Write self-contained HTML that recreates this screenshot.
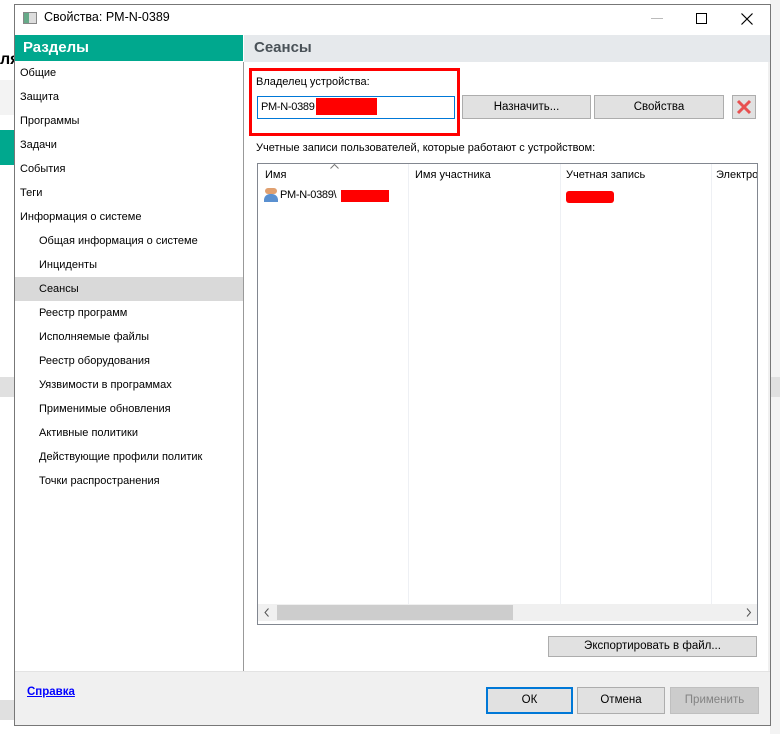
<!DOCTYPE html>
<html><head><meta charset="utf-8"><style>
*{box-sizing:border-box;margin:0;padding:0}
body{width:780px;height:734px;position:relative;overflow:hidden;background:#fff;font-family:"Liberation Sans",sans-serif;font-size:11px;color:#000}
.a{position:absolute}
.btn{position:absolute;background:#e1e1e1;border:1px solid #adadad;text-align:center;font-size:11.5px;line-height:20px}
.nav{position:absolute;left:15px;width:228px;height:24px;line-height:24px;font-size:11px}
</style></head><body>
<div class="a" style="left:0;top:40px;width:14px;height:40px;background:#fff;font-weight:bold;font-size:16px;line-height:40px">ля</div>
<div class="a" style="left:0;top:80px;width:14px;height:35px;background:#f3f3f3"></div>
<div class="a" style="left:0;top:130px;width:14px;height:35px;background:#00a88e"></div>
<div class="a" style="left:0;top:377px;width:14px;height:20px;background:#e0e0e0"></div>
<div class="a" style="left:0;top:700px;width:14px;height:20px;background:#e0e0e0"></div>
<div class="a" style="left:770px;top:0;width:10px;height:734px;background:#f3f3f3"></div>
<div class="a" style="left:770px;top:377px;width:10px;height:20px;background:#e0e0e0"></div>
<div class="a" style="left:14px;top:4px;width:757px;height:722px;border:1px solid #777;background:#fff"></div>
<div class="a" style="left:23px;top:12px;width:14px;height:12px;border:1px solid #888;background:linear-gradient(90deg,#6a8 0 40%,#ddd 40%)"></div>
<div class="a" style="left:44px;top:10px;font-size:12.5px">Свойства: PM-N-0389</div>
<div class="a" style="left:651px;top:18px;width:12px;height:1px;background:#bbb"></div>
<div class="a" style="left:696px;top:13px;width:11px;height:11px;border:1px solid #000"></div>
<svg class="a" style="left:741px;top:13px" width="12" height="12"><path d="M0.5 0.5L11.5 11.5M11.5 0.5L0.5 11.5" stroke="#000" stroke-width="1.2"/></svg>
<div class="a" style="left:15px;top:35px;width:228px;height:26px;background:#00a88e;color:#fff;font-weight:bold;font-size:15px;line-height:26px;padding-left:8px">Разделы</div>
<div class="a" style="left:244px;top:35px;width:526px;height:27px;background:#e6e9ec;color:#4a5258;font-weight:bold;font-size:15px;line-height:26px;padding-left:10px">Сеансы</div>
<div class="a" style="left:243px;top:62px;width:1px;height:609px;background:#999"></div>
<div class="a" style="left:768px;top:62px;width:2px;height:609px;background:#f0f0f0"></div>
<div class="nav" style="top:61px;padding-left:5px">Общие</div>
<div class="nav" style="top:85px;padding-left:5px">Защита</div>
<div class="nav" style="top:109px;padding-left:5px">Программы</div>
<div class="nav" style="top:133px;padding-left:5px">Задачи</div>
<div class="nav" style="top:157px;padding-left:5px">События</div>
<div class="nav" style="top:181px;padding-left:5px">Теги</div>
<div class="nav" style="top:205px;padding-left:5px">Информация о системе</div>
<div class="nav" style="top:229px;padding-left:24px">Общая информация о системе</div>
<div class="nav" style="top:253px;padding-left:24px">Инциденты</div>
<div class="nav" style="top:277px;padding-left:24px;background:#d9d9d9">Сеансы</div>
<div class="nav" style="top:301px;padding-left:24px">Реестр программ</div>
<div class="nav" style="top:325px;padding-left:24px">Исполняемые файлы</div>
<div class="nav" style="top:349px;padding-left:24px">Реестр оборудования</div>
<div class="nav" style="top:373px;padding-left:24px">Уязвимости в программах</div>
<div class="nav" style="top:397px;padding-left:24px">Применимые обновления</div>
<div class="nav" style="top:421px;padding-left:24px">Активные политики</div>
<div class="nav" style="top:445px;padding-left:24px">Действующие профили политик</div>
<div class="nav" style="top:469px;padding-left:24px">Точки распространения</div>
<div class="a" style="left:249px;top:68px;width:211px;height:68px;border:3px solid #f00"></div>
<div class="a" style="left:256px;top:76px;font-size:11px">Владелец устройства:</div>
<div class="a" style="left:257px;top:96px;width:198px;height:23px;border:1px solid #0078d7;font-size:11px;line-height:21px;padding-left:3px;letter-spacing:-0.3px">PM-N-0389</div>
<div class="a" style="left:316px;top:98px;width:61px;height:17px;background:#f00"></div>
<div class="btn" style="left:462px;top:95px;width:129px;height:24px;line-height:22px">Назначить...</div>
<div class="btn" style="left:594px;top:95px;width:130px;height:24px;line-height:22px">Свойства</div>
<div class="btn" style="left:732px;top:95px;width:24px;height:24px"><svg width="22" height="22" style="display:block"><path d="M5 5L17 17M17 5L5 17" stroke="#e85050" stroke-width="3"/></svg></div>
<div class="a" style="left:256px;top:142px;font-size:11px">Учетные записи пользователей, которые работают с устройством:</div>
<div class="a" style="left:257px;top:163px;width:501px;height:462px;border:1px solid #828790;background:#fff;overflow:hidden">
<div class="a" style="left:150px;top:0;width:1px;height:440px;background:#eef0f4"></div>
<div class="a" style="left:302px;top:0;width:1px;height:440px;background:#eef0f4"></div>
<div class="a" style="left:453px;top:0;width:1px;height:440px;background:#eef0f4"></div>
<svg class="a" style="left:72px;top:0" width="9" height="5"><path d="M0.5 4.5L4.5 0.5L8.5 4.5" stroke="#777" fill="none"/></svg>
<div class="a" style="left:7px;top:5px;font-size:11px">Имя</div>
<div class="a" style="left:157px;top:5px;font-size:11px">Имя участника</div>
<div class="a" style="left:308px;top:5px;font-size:11px">Учетная запись</div>
<div class="a" style="left:458px;top:5px;font-size:11px;white-space:nowrap">Электро</div>
<div class="a" style="left:7px;top:24px;width:12px;height:6px;border-radius:6px;background:#e0a070"></div>
<div class="a" style="left:6px;top:30px;width:14px;height:8px;border-radius:6px 6px 0 0;background:#5a90d0"></div>
<div class="a" style="left:22px;top:25px;font-size:11px;letter-spacing:-0.3px">PM-N-0389\</div>
<div class="a" style="left:83px;top:26px;width:48px;height:12px;background:#f00"></div>
<div class="a" style="left:308px;top:27px;width:48px;height:12px;background:#f00;border-radius:3px"></div>
<div class="a" style="left:0;top:440px;width:499px;height:17px;background:#f0f0f0"></div>
<div class="a" style="left:19px;top:441px;width:236px;height:15px;background:#cdcdcd"></div>
<svg class="a" style="left:6px;top:444px" width="6" height="9"><path d="M4.5 0.5L1 4.5L4.5 8.5" stroke="#555" fill="none"/></svg>
<svg class="a" style="left:488px;top:444px" width="6" height="9"><path d="M1 0.5L4.5 4.5L1 8.5" stroke="#555" fill="none"/></svg>
</div>
<div class="btn" style="left:548px;top:636px;width:209px;height:21px;line-height:19px">Экспортировать в файл...</div>
<div class="a" style="left:15px;top:671px;width:755px;height:54px;background:#f0f0f0;border-top:1px solid #e3e3e3"></div>
<div class="a" style="left:27px;top:686px;font-size:11.5px;color:#00f;font-weight:bold;text-decoration:underline">Справка</div>
<div class="btn" style="left:486px;top:687px;width:87px;height:27px;line-height:23px;border:2px solid #0078d7">ОК</div>
<div class="btn" style="left:577px;top:687px;width:88px;height:27px;line-height:25px">Отмена</div>
<div class="btn" style="left:670px;top:687px;width:89px;height:27px;line-height:25px;background:#ccc;border-color:#bfbfbf;color:#838383">Применить</div>
</body></html>
